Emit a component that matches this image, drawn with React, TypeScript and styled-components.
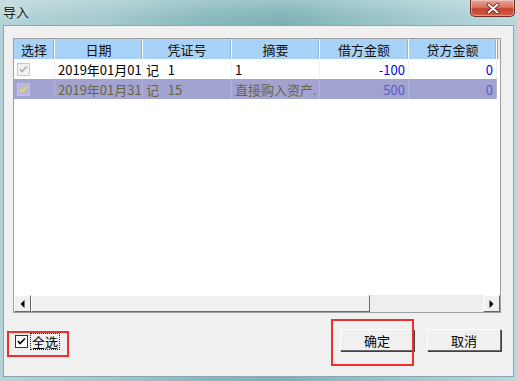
import React from "react";
import styled, { createGlobalStyle } from "styled-components";

const Global = createGlobalStyle`
  html, body { margin: 0; padding: 0; background: #fff; }
  body { font-family: "Noto Sans CJK SC", "Liberation Sans", sans-serif; font-size: 12px; }
`;

const Win = styled.div`
  width: 517px;
  height: 381px;
  display: flex;
  flex-direction: column;
  box-sizing: border-box;
  background: linear-gradient(90deg, #b3d3d8 0%, #a2c9ce 20%, #86b8bd 40%, #7db1b6 55%, #92c0c5 70%, #a9cfd4 88%, #b9d8dc 100%);
  position: relative;
  overflow: hidden;
`;

const TitleBar = styled.div`
  height: 25px;
  display: flex;
  align-items: flex-start;
  justify-content: space-between;
  padding-left: 3px;
  background: linear-gradient(180deg, rgba(255,255,255,0.25) 0%, rgba(255,255,255,0.05) 60%, rgba(255,255,255,0) 100%);
`;

const Title = styled.div`
  font-size: 13px;
  line-height: 13px;
  margin-top: 5px;
  color: #1a1a1a;
  text-shadow: 0 0 6px rgba(255,255,255,0.9);
`;

const CloseBtn = styled.div`
  width: 45px;
  height: 17px;
  margin-right: 2px;
  box-sizing: border-box;
  border: 1px solid #6b2a22;
  border-top: none;
  border-radius: 0 0 5px 5px;
  background: linear-gradient(180deg, #e8a597 0%, #d9735f 45%, #c7412a 55%, #d2614a 100%);
  display: flex;
  align-items: center;
  justify-content: center;
  box-shadow: inset 0 0 0 1px rgba(255,255,255,0.35);
`;

const Client = styled.div`
  flex: 1;
  margin: 0 3px 4px 3px;
  background: #f0f0f0;
  border: 1px solid #8fa6ae;
  display: flex;
  flex-direction: column;
  padding: 12px 12px 0 9px;
`;

const Grid = styled.div`
  height: 275px;
  box-sizing: border-box;
  border-top: 1px solid #a0a0a0;
  border-left: 1px solid #a0a0a0;
  border-right: 1px solid #a0a0a0;
  border-bottom: 1px solid #a0a0a0;
  background: #fff;
  display: flex;
  flex-direction: column;
`;

const GridBody = styled.div`
  flex: 1;
  display: flex;
  flex-direction: row;
  overflow: hidden;
`;

const Table = styled.div`
  display: grid;
  grid-template-columns: 41px 88px 89px 88px 89px 88px;
  grid-auto-rows: 20px;
  align-content: start;
`;

const Filler = styled.div`
  flex: 1;
  background: #fff;
  border-left: 1px solid #a0a0a0;
  height: 20px;
  background: #e8e8e8;
`;

const Head = styled.div`
  background: #a9d2f8;
  border-right: 1px solid #ffffff;
  box-shadow: inset -1px 0 0 #8fb3d6;
  display: flex;
  align-items: center;
  justify-content: center;
  font-size: 13px;
  color: #111;
  white-space: nowrap;
  overflow: hidden;
`;

const Cell = styled.div<{ $sel?: boolean; $align?: "left" | "right" | "center"; $blue?: boolean }>`
  background: ${(p) => (p.$sel ? "#a3a3d2" : "#fff")};
  border-right: 1px solid ${(p) => (p.$sel ? "#b3b3dc" : "#f0f0f0")};
  color: ${(p) => (p.$blue ? (p.$sel ? "#5a5ac8" : "#0000f0") : p.$sel ? "#6a6440" : "#000")};
  display: flex;
  align-items: center;
  justify-content: ${(p) => (p.$align === "right" ? "flex-end" : p.$align === "center" ? "center" : "flex-start")};
  padding: 0 ${(p) => (p.$align === "right" ? "3px" : "0")} 0 ${(p) => (p.$align === "left" ? "3px" : "0")};
  font-size: 13px;
  white-space: pre;
  overflow: hidden;
`;

const MiniCheck = styled.div<{ $sel?: boolean }>`
  width: 13px;
  height: 13px;
  box-sizing: border-box;
  margin-left: 3px;
  border: 1px solid ${(p) => (p.$sel ? "#d8cf6a" : "#c8c8c8")};
  background: ${(p) => (p.$sel ? "#b8b8dc" : "#f2f2f2")};
  display: flex;
  align-items: center;
  justify-content: center;
`;

const HScroll = styled.div`
  height: 17px;
  display: flex;
  background: repeating-conic-gradient(#f4f4f4 0% 25%, #e6e6e6 0% 50%) 0 0 / 2px 2px;
`;

const ScrollBtn = styled.div`
  width: 17px;
  box-sizing: border-box;
  background: #f0f0f0;
  border-top: 1px solid #fff;
  border-left: 1px solid #fff;
  border-right: 1px solid #696969;
  border-bottom: 1px solid #696969;
  display: flex;
  align-items: center;
  justify-content: center;
`;

const Thumb = styled.div`
  width: 339px;
  box-sizing: border-box;
  background: #f0f0f0;
  border-top: 1px solid #fff;
  border-left: 1px solid #fff;
  border-right: 1px solid #696969;
  border-bottom: 1px solid #696969;
`;

const Track = styled.div`
  flex: 1;
`;

const Footer = styled.div`
  display: flex;
  align-items: flex-start;
  padding-top: 16px;
`;

const CheckLabel = styled.label`
  display: flex;
  align-items: center;
  gap: 3px;
  margin-top: 5px;
  margin-left: 2px;
`;

const BigCheck = styled.div`
  width: 13px;
  height: 13px;
  box-sizing: border-box;
  border: 1px solid #333;
  background: #fff;
  display: flex;
  align-items: center;
  justify-content: center;
`;

const Focus = styled.span`
  outline: 1px dotted #222;
  outline-offset: 0;
  font-size: 13px;
  line-height: 15px;
  padding: 0 1px;
  color: #000;
`;

const Spacer = styled.div`
  flex: 1;
`;

const Button = styled.div`
  width: 74px;
  height: 22px;
  box-sizing: border-box;
  background: #f0f0f0;
  border-top: 1px solid #fff;
  border-left: 1px solid #fff;
  border-right: 1px solid #696969;
  border-bottom: 1px solid #696969;
  box-shadow: 1px 1px 0 #404040;
  display: flex;
  align-items: center;
  justify-content: center;
  font-size: 13px;
  color: #000;
  & + & {
    margin-left: 13px;
  }
`;

const Mark = styled.div<{ $x: number; $y: number; $w: number; $h: number }>`
  position: absolute;
  left: ${(p) => p.$x}px;
  top: ${(p) => p.$y}px;
  width: ${(p) => p.$w}px;
  height: ${(p) => p.$h}px;
  box-sizing: border-box;
  border: 2px solid #ee2f2f;
  pointer-events: none;
`;

const Tick = ({ color }: { color: string }) => (
  <svg width="9" height="9" viewBox="0 0 9 9">
    <path d="M1 4 L3 6.5 L8 1.5" fill="none" stroke={color} strokeWidth="1.6" />
  </svg>
);

const Arrow = ({ dir }: { dir: "l" | "r" }) => (
  <svg width="5" height="8" viewBox="0 0 5 8">
    {dir === "l" ? <path d="M4.5 0 L0.5 4 L4.5 8 Z" fill="#000" /> : <path d="M0.5 0 L4.5 4 L0.5 8 Z" fill="#000" />}
  </svg>
);

const rows = [
  { date: "2019年01月01日", no: "记   1", memo: "1", debit: "-100", credit: "0", sel: false },
  { date: "2019年01月31日", no: "记   15", memo: "直接购入资产.", debit: "500", credit: "0", sel: true },
];

export default function App() {
  return (
    <>
      <Global />
      <Win>
        <TitleBar>
          <Title>导入</Title>
          <CloseBtn>
            <svg width="14" height="11" viewBox="0 0 14 11">
              <path d="M2.5 1.5 L11.5 9.5 M11.5 1.5 L2.5 9.5" stroke="#5a1a12" strokeWidth="3.6" strokeLinecap="round" />
              <path d="M2.5 1.5 L11.5 9.5 M11.5 1.5 L2.5 9.5" stroke="#fff" strokeWidth="2" strokeLinecap="round" />
            </svg>
          </CloseBtn>
        </TitleBar>
        <Client>
          <Grid>
            <GridBody>
              <Table>
                <Head>选择</Head>
                <Head>日期</Head>
                <Head>凭证号</Head>
                <Head>摘要</Head>
                <Head>借方金额</Head>
                <Head>贷方金额</Head>
                {rows.map((r, i) => (
                  <React.Fragment key={i}>
                    <Cell $sel={r.sel}>
                      <MiniCheck $sel={r.sel}>
                        <Tick color={r.sel ? "#e8e040" : "#b0b0b0"} />
                      </MiniCheck>
                    </Cell>
                    <Cell $sel={r.sel} $align="left">{r.date}</Cell>
                    <Cell $sel={r.sel} $align="left">{r.no}</Cell>
                    <Cell $sel={r.sel} $align="left">{r.memo}</Cell>
                    <Cell $sel={r.sel} $align="right" $blue>{r.debit}</Cell>
                    <Cell $sel={r.sel} $align="right" $blue>{r.credit}</Cell>
                  </React.Fragment>
                ))}
              </Table>
              <Filler />
            </GridBody>
            <HScroll>
              <ScrollBtn><Arrow dir="l" /></ScrollBtn>
              <Thumb />
              <Track />
              <ScrollBtn><Arrow dir="r" /></ScrollBtn>
            </HScroll>
          </Grid>
          <Footer>
            <CheckLabel>
              <BigCheck><Tick color="#000" /></BigCheck>
              <Focus>全选</Focus>
            </CheckLabel>
            <Spacer />
            <Button>确定</Button>
            <Button>取消</Button>
          </Footer>
        </Client>
        <Mark $x={7} $y={331} $w={62} $h={26} />
        <Mark $x={331} $y={319} $w={83} $h={47} />
      </Win>
    </>
  );
}
